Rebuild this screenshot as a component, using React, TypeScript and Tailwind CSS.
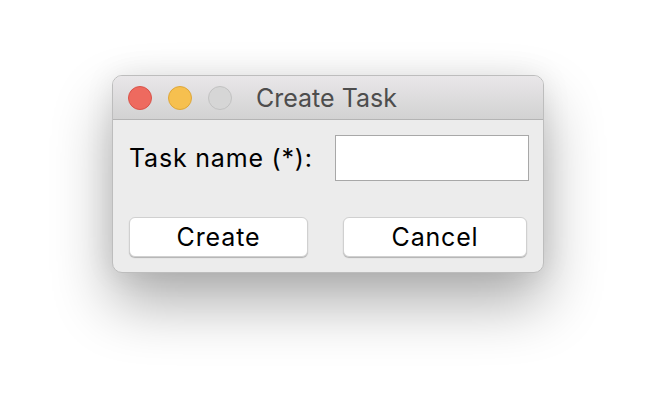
import React, { useState } from 'react';

const font = { fontFamily: 'Inter, "Liberation Sans", sans-serif' };

const App: React.FC = () => {
  const [taskName, setTaskName] = useState<string>('');

  return (
    <div className="w-[656px] h-[420px] bg-white overflow-hidden pt-[75px]" style={font}>
      <div className="mx-auto w-[432px] h-[198px] rounded-[10px] border border-[#bdbdbd] bg-[#ececec] shadow-[0_30px_60px_rgba(0,0,0,0.32),0_0_30px_rgba(0,0,0,0.08)] overflow-hidden flex flex-col">
        {/* title bar */}
        <div className="relative h-[44px] shrink-0 bg-gradient-to-b from-[#e9e7e9] to-[#d2d2d2] border-b border-[#b4b4b4] flex items-center pl-[15px]">
          <div className="flex gap-4">
            <span className="w-6 h-6 rounded-full bg-[#ee6a5f] border border-[#d9534a]" />
            <span className="w-6 h-6 rounded-full bg-[#f6c04f] border border-[#dea73a]" />
            <span className="w-6 h-6 rounded-full bg-[#d6d6d6] border border-[#c2c2c2]" />
          </div>
          <span className="ml-[24px] mt-[1px] text-[25px] text-[#4d4d4d] leading-none">Create Task</span>
        </div>

        {/* body */}
        <div className="flex-1 flex flex-col justify-between pl-[16px] pr-[14px] pt-[15px] pb-[15px]">
          <div className="flex items-center justify-between">
            <label className="text-[25px] text-black leading-none tracking-[0.8px]">Task name (*):</label>
            <input
              type="text"
              value={taskName}
              onChange={e => setTaskName(e.target.value)}
              className="w-[194px] h-[46px] bg-white border-[1.5px] border-[#a8a8a8] outline-none px-2 text-[22px]"
            />
          </div>
          <div className="flex items-center justify-between">
            <button className="w-[179px] h-[40px] bg-white rounded-[6px] border border-[#d0d0d0] shadow-[0_1px_1px_rgba(0,0,0,0.25)] text-[25px] text-black leading-none tracking-[0.9px]">
              Create
            </button>
            <button className="w-[184px] h-[40px] mr-[2px] bg-white rounded-[6px] border border-[#d0d0d0] shadow-[0_1px_1px_rgba(0,0,0,0.25)] text-[25px] text-black leading-none tracking-[0.8px]">
              Cancel
            </button>
          </div>
        </div>
      </div>
    </div>
  );
};

export default App;
